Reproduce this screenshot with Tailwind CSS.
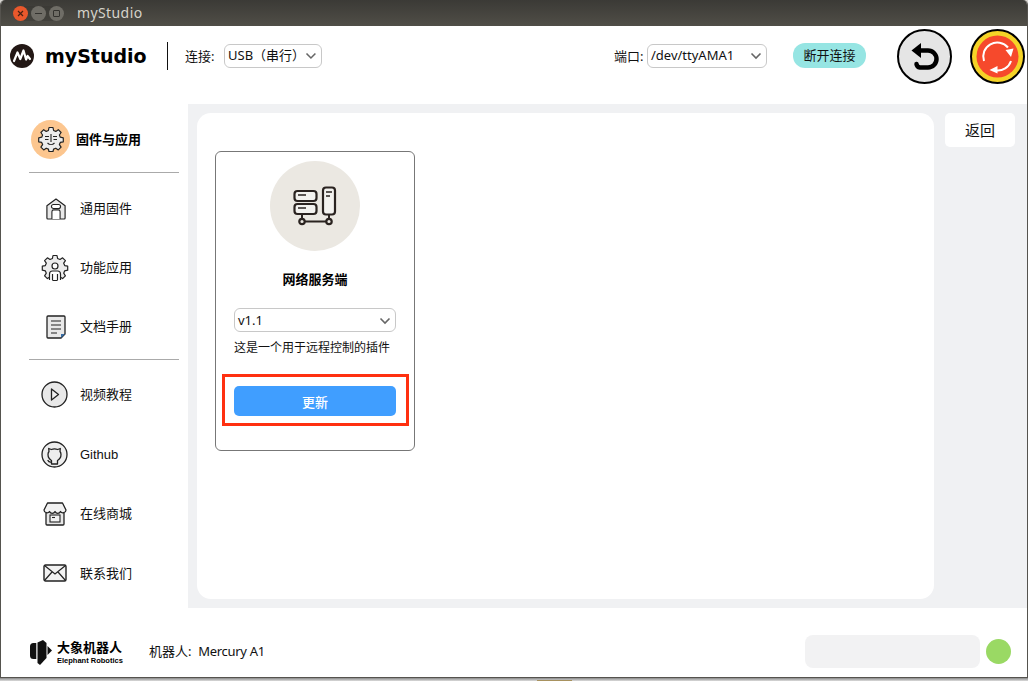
<!DOCTYPE html>
<html lang="zh-CN">
<head>
<meta charset="UTF-8">
<title>myStudio</title>
<script src="https://cdn.jsdelivr.net/npm/@tailwindcss/browser@4"></script>
</head>
<body class="w-[1028px] h-[681px] overflow-hidden bg-[#d8d6d2] font-['Noto_Sans','Noto_Sans_CJK_SC',sans-serif] text-[#111]">
<!-- desktop strip behind the window -->
<div class="relative w-[1028px] h-[681px]">
  <div class="absolute left-0 top-[344px] w-[2px] h-[76px] bg-[#b8325a]"></div>
  <div class="absolute left-0 top-[678px] w-[1028px] h-[3px] bg-gradient-to-b from-[#8a8a8a] to-[#dddddd]"></div>
  <div class="absolute left-[537px] top-[680px] w-[35px] h-[1px] bg-[#a8925f]"></div>

  <div class="absolute left-0 top-0 w-[1028px] h-[678px] flex flex-col border-x border-b border-[#55534e] bg-white rounded-t-[5px] overflow-hidden">
    <!-- title bar -->
    <div class="h-[26px] shrink-0 flex items-center bg-gradient-to-b from-[#3b3a36] to-[#504e47] pl-[12px]">
      <div class="flex items-center gap-[3px] bg-[#35342f]/40 rounded-full">
        <div class="w-[15px] h-[15px] rounded-full bg-[#e9582c] flex items-center justify-center">
          <svg width="7" height="7" viewBox="0 0 7 7"><path d="M1 1l5 5M6 1L1 6" stroke="#4a2112" stroke-width="1.2"/></svg>
        </div>
        <div class="w-[15px] h-[15px] rounded-full bg-[#6f6d66] flex items-center justify-center">
          <div class="w-[7px] h-[1px] bg-[#33322e]"></div>
        </div>
        <div class="w-[15px] h-[15px] rounded-full bg-[#6f6d66] flex items-center justify-center">
          <div class="w-[7px] h-[7px] border border-[#33322e] rounded-[1px]"></div>
        </div>
      </div>
      <span class="ml-[13px] pb-[1px] text-[14px] text-[#d6d3ca] tracking-[0.4px]">myStudio</span>
    </div>

    <!-- header -->
    <div class="h-[78px] shrink-0 flex items-start bg-white">
      <svg class="ml-[9px] mt-[18px] shrink-0" width="24" height="24" viewBox="0 0 24 24">
        <circle cx="12" cy="12" r="12" fill="#231815"/>
        <path d="M4 17l3.500-8.500 2.800 6.500 3.200-8.500 2.600 9 1.500-3.500 2.400 3" fill="none" stroke="#fff" stroke-width="2.2" stroke-linecap="round" stroke-linejoin="round"/>
      </svg>
      <span class="ml-[11px] mt-[14px] text-[19px] leading-[32px] font-bold text-black font-['DejaVu_Sans','Noto_Sans_CJK_SC',sans-serif] w-[122px] whitespace-nowrap">myStudio</span>
      <div class="mt-[16px] w-[1px] h-[28px] bg-[#111] shrink-0"></div>
      <span class="ml-[17px] mt-[18px] leading-[24px] text-[13px] w-[39px] whitespace-nowrap">连接:</span>
      <div class="mt-[18px] w-[98px] h-[24px] border border-[#c8c8c8] rounded-[6px] flex items-center justify-between pl-[3px] pr-[4px] text-[13px] whitespace-nowrap">
        <span>USB（串行）</span>
        <svg width="12" height="8" viewBox="0 0 12 8"><path d="M1.500 1.500L6 6l4.500-4.500" fill="none" stroke="#666" stroke-width="1.600"/></svg>
      </div>
      <span class="ml-[292px] mt-[18px] leading-[24px] text-[13px] w-[33px] whitespace-nowrap">端口:</span>
      <div class="mt-[18px] w-[120px] h-[24px] border border-[#c8c8c8] rounded-[6px] flex items-center justify-between pl-[3px] pr-[4px] text-[13px] whitespace-nowrap">
        <span>/dev/ttyAMA1</span>
        <svg width="12" height="8" viewBox="0 0 12 8"><path d="M1.500 1.500L6 6l4.500-4.500" fill="none" stroke="#666" stroke-width="1.600"/></svg>
      </div>
      <div class="ml-[26px] mt-[17px] w-[73px] h-[25px] rounded-[12px] bg-[#96e5e3] text-[13px] leading-[25px] text-center">断开连接</div>
      <!-- back -->
      <svg class="ml-[31px] mt-[3px] shrink-0" width="55" height="55" viewBox="0 0 55 55">
        <circle cx="27.500" cy="27.500" r="26.500" fill="#e5e5e5" stroke="#000" stroke-width="2"/>
        <path d="M23 21.500h8a8.500 8.500 0 0 1 0 17h-8a4 4 0 0 1-3.500-3.500" fill="none" stroke="#000" stroke-width="4.500" stroke-linecap="round"/>
        <path d="M24 14v15L14.500 21.500z" fill="#000"/>
      </svg>
      <!-- reset -->
      <svg class="ml-[18px] mt-[3px] shrink-0" width="55" height="55" viewBox="0 0 55 55">
        <circle cx="27.500" cy="27.500" r="26.500" fill="#f5d327" stroke="#000" stroke-width="2"/>
        <circle cx="27.500" cy="27.500" r="21" fill="#f6492c"/>
        <path d="M14 32A14 14 0 0 1 38 18.500M41 32A14 14 0 0 1 26 41.500" fill="none" stroke="#fff" stroke-width="2"/>
        <path d="M35.500 21l8-1.500-2.500 8.500zM27.500 37v7.500l-8-3.500z" fill="#fff"/>
      </svg>
    </div>

    <!-- body -->
    <div class="h-[504px] shrink-0 flex">
      <!-- sidebar -->
      <div class="w-[187px] shrink-0 bg-white flex flex-col pl-[28px] text-[13px] font-['Liberation_Sans','Noto_Sans_CJK_SC',sans-serif]">
        <div class="mt-[15px] h-[40px] flex items-center pl-[2px]">
          <div class="w-[39px] h-[39px] rounded-full bg-[#fcc68f] flex items-center justify-center">
            <svg width="26" height="26" viewBox="0 0 26 26">
              <path d="M11 1.500h4l.6 3 2.200.9 2.500-1.700 2.800 2.800-1.700 2.500.9 2.200 3 .6v4l-3 .6-.9 2.200 1.700 2.500-2.800 2.800-2.500-1.700-2.200.9-.6 2.400h-4l-.6-2.400-2.200-.9-2.500 1.700-2.800-2.800 1.700-2.500-.9-2.200-3-.6v-4l3-.6.9-2.200-1.700-2.500 2.800-2.800 2.500 1.700 2.200-.9z" fill="#ececec" stroke="#222" stroke-width="1.200" stroke-linejoin="round"/>
              <path d="M7 10.500h4M15 10.500h4M7 13.500h3.500M15.500 13.500h3.500M13 8v8M9.500 17c2 2 5 2 7 0" fill="none" stroke="#222" stroke-width="1.100"/>
            </svg>
          </div>
          <span class="ml-[6px] pt-[1px] font-bold text-black">固件与应用</span>
        </div>
        <div class="mt-[13px] w-[150px] h-[1px] bg-[#aaaaaa]"></div>

        <div class="mt-[6px] h-[59px] flex items-center">
          <div class="w-[51px] flex justify-center pl-[2px]">
            <svg width="20" height="24" viewBox="0 0 22 24">
              <path d="M1 8.500L11 1l10 7.500V22a1 1 0 0 1-1 1H2a1 1 0 0 1-1-1z" fill="#e8e8e8" stroke="#222" stroke-width="1.300" stroke-linejoin="round"/>
              <rect x="6" y="7" width="10" height="4.500" rx="2.200" fill="#fff" stroke="#222" stroke-width="1.200"/>
              <path d="M6.500 23v-8a2 2 0 0 1 2-2h5a2 2 0 0 1 2 2v8" fill="#fff" stroke="#222" stroke-width="1.200"/>
            </svg>
          </div>
          <span>通用固件</span>
        </div>
        <div class="h-[59px] flex items-center">
          <div class="w-[51px] flex justify-center pt-[1px]">
            <svg width="28" height="28" viewBox="0 0 28 28">
              <path d="M12 1.500h4l.6 3 2.400 1 2.600-1.700 2.800 2.800-1.700 2.600 1 2.400 3 .6v4l-3 .6-1 2.400 1.700 2.600-2.800 2.800-2.600-1.700-2.400 1-.6 2.600h-4l-.6-2.600-2.400-1-2.600 1.700-2.800-2.800 1.700-2.600-1-2.400-3-.6v-4l3-.6 1-2.400-1.700-2.600 2.800-2.800 2.600 1.700 2.400-1z" fill="#ececec" stroke="#222" stroke-width="1.200" stroke-linejoin="round"/>
              <circle cx="14" cy="12" r="3" fill="#fff" stroke="#222" stroke-width="1.200"/>
              <path d="M8.500 26v-6a3 3 0 0 1 3-3h5a3 3 0 0 1 3 3v6M11.500 20v6M16.500 20v6" fill="#fff" stroke="#222" stroke-width="1.200"/>
            </svg>
          </div>
          <span>功能应用</span>
        </div>
        <div class="h-[59px] flex items-center">
          <div class="w-[51px] flex justify-center pl-[2px] pt-[1px]">
            <svg width="20" height="24" viewBox="0 0 20 24">
              <path d="M2 1h16a1 1 0 0 1 1 1v17l-4 4H2a1 1 0 0 1-1-1V2a1 1 0 0 1 1-1z" fill="#e8e8e8" stroke="#222" stroke-width="1.300"/>
              <path d="M5 6h10M5 10h10M5 14h10M5 18h6" stroke="#222" stroke-width="1.200"/>
              <path d="M15 23v-4h4z" fill="#3a6ea5"/>
            </svg>
          </div>
          <span>文档手册</span>
        </div>
        <div class="mt-[3px] w-[150px] h-[1px] bg-[#aaaaaa]"></div>

        <div class="mt-[5px] h-[59.5px] flex items-center">
          <div class="w-[51px] flex justify-center">
            <svg width="27" height="27" viewBox="0 0 27 27">
              <circle cx="13.500" cy="13.500" r="12.500" fill="#e8e8e8" stroke="#222" stroke-width="1.300"/>
              <path d="M10.500 8l7 5.500-7 5.500z" fill="#f2f2f2" stroke="#222" stroke-width="1.300" stroke-linejoin="round"/>
            </svg>
          </div>
          <span>视频教程</span>
        </div>
        <div class="h-[59.5px] flex items-center">
          <div class="w-[51px] flex justify-center">
            <svg width="27" height="27" viewBox="0 0 27 27">
              <circle cx="13.500" cy="13.500" r="12.500" fill="#eeeeee" stroke="#222" stroke-width="1.300"/>
              <path d="M10.500 23v-3.500c-1-.6-3.500-2-3.500-6 0-1.200.4-2.200 1-3l-.3-3 2.600 1c1.800-.6 4.600-.6 6.400 0l2.600-1-.3 3c.6.8 1 1.800 1 3 0 4-2.500 5.400-3.500 6V23z" fill="#eeeeee" stroke="#222" stroke-width="1.300" stroke-linejoin="round"/>
              <path d="M10.500 21c-2 .6-3-.3-3.800-2" fill="none" stroke="#222" stroke-width="1.300"/>
            </svg>
          </div>
          <span>Github</span>
        </div>
        <div class="h-[59.5px] flex items-center">
          <div class="w-[51px] flex justify-center pt-[1px]">
            <svg width="24" height="24" viewBox="0 0 24 24">
              <path d="M3 11v11a1 1 0 0 0 1 1h16a1 1 0 0 0 1-1V11" fill="#e8e8e8" stroke="#222" stroke-width="1.300"/>
              <path d="M4.500 1h15l3.500 7a3 3 0 0 1-5.500 1.500A3 3 0 0 1 12 9.500a3 3 0 0 1-5.500 0A3 3 0 0 1 1 8z" fill="#f2f2f2" stroke="#222" stroke-width="1.300" stroke-linejoin="round"/>
              <rect x="7" y="13" width="10" height="7" fill="#f2f2f2" stroke="#222" stroke-width="1.100"/>
              <path d="M9 15.500h3" stroke="#222" stroke-width="1.100"/>
            </svg>
          </div>
          <span>在线商城</span>
        </div>
        <div class="h-[59.5px] flex items-center">
          <div class="w-[51px] flex justify-center">
            <svg width="24" height="18" viewBox="0 0 24 18">
              <rect x="1" y="1" width="22" height="16" rx="1.500" fill="#f2f2f2" stroke="#222" stroke-width="1.400"/>
              <path d="M1.500 1.500L12 10l10.500-8.500M1.500 16.500L9 8M22.500 16.500L15 8" fill="none" stroke="#222" stroke-width="1.200"/>
            </svg>
          </div>
          <span>联系我们</span>
        </div>
      </div>

      <!-- content -->
      <div class="flex-1 bg-[#f0f1f3] flex items-start pl-[9px] pt-[9px]">
        <div class="w-[737px] h-[486px] bg-white rounded-[14px] pl-[18px] pt-[38px]">
          <div class="relative w-[200px] h-[300px] border border-[#777777] rounded-[6px] flex flex-col items-center pt-[9px]">
            <div class="w-[90px] h-[90px] rounded-full bg-[#ebe8e2] flex items-center justify-center pb-[1px]">
              <svg width="44" height="40" viewBox="0 0 44 40">
                <rect x="1.500" y="5" width="22" height="10" rx="3" fill="#f3f2ef" stroke="#2a2320" stroke-width="2.200"/>
                <rect x="1.500" y="18" width="22" height="10" rx="3" fill="#f3f2ef" stroke="#2a2320" stroke-width="2.200"/>
                <rect x="30" y="1.500" width="12" height="27" rx="3" fill="#f3f2ef" stroke="#2a2320" stroke-width="2.200"/>
                <path d="M5 9h8M5 22h8M33 6h6M33 10h4" stroke="#2a2320" stroke-width="1.500"/>
                <path d="M9 28v5M36 28v5M12 35.500h21" stroke="#2a2320" stroke-width="2"/>
                <circle cx="9" cy="35.500" r="2.700" fill="#ebe8e2" stroke="#2a2320" stroke-width="2.200"/>
                <circle cx="36" cy="35.500" r="2.700" fill="#ebe8e2" stroke="#2a2320" stroke-width="2.200"/>
              </svg>
            </div>
            <div class="mt-[19px] h-[18px] leading-[18px] text-[13px] font-bold text-black">网络服务端</div>
            <div class="mt-[20px] w-[162px] h-[24px] border border-[#c8c8c8] rounded-[6px] flex items-center justify-between pl-[3px] pr-[4px] pt-[1px] text-[13px]">
              <span>v1.1</span>
              <svg width="12" height="8" viewBox="0 0 12 8"><path d="M1.500 1.500L6 6l4.500-4.500" fill="none" stroke="#666" stroke-width="1.600"/></svg>
            </div>
            <div class="mt-[8px] w-[162px] text-[12px] leading-[16px] whitespace-nowrap">这是一个用于远程控制的插件</div>
            <div class="mt-[30px] w-[162px] h-[30px] rounded-[5px] bg-[#409eff] text-white text-[13px] font-medium flex items-center justify-center pt-[4px]">更新</div>
            <!-- red annotation box -->
            <div class="absolute left-[6px] top-[222px] w-[187px] h-[52px] border-[3px] border-[#ff3010]"></div>
          </div>
        </div>
        <div class="ml-[11px] w-[70px] h-[34px] bg-white rounded-[5px] text-[15px] flex items-center justify-center pt-[1px]">返回</div>
      </div>
    </div>

    <!-- footer -->
    <div class="flex-1 flex items-start bg-white">
      <svg class="ml-[29px] mt-[32px] shrink-0" width="22" height="25" viewBox="0 0 22 25">
        <path d="M3.500 3h2.800v16H3.500A3.500 3.500 0 0 1 0 15.500v-9A3.500 3.500 0 0 1 3.500 3z" fill="#111"/>
        <path d="M7.500 2.500L13 0l3.500 3v15L10 25l-2.500-2z" fill="#111"/>
        <path d="M17.500 6L22 10.500 17.500 15z" fill="#111"/>
      </svg>
      <div class="ml-[5px] mt-[31px] w-[92px] flex flex-col">
        <span class="text-[13px] leading-[17px] font-bold text-black whitespace-nowrap">大象机器人</span>
        <span class="text-[7.500px] leading-[10px] font-bold text-black font-['Liberation_Sans',sans-serif] whitespace-nowrap">Elephant Robotics</span>
      </div>
      <span class="mt-[33px] text-[13px] leading-[20px] whitespace-nowrap">机器人:&nbsp; <span class="tracking-[-0.3px]">Mercury A1</span></span>
      <div class="ml-auto mt-[27px] w-[175px] h-[33px] rounded-[8px] bg-[#f2f2f3]"></div>
      <div class="ml-[6px] mr-[16px] mt-[31px] w-[25px] h-[25px] rounded-full bg-[#9ad964]"></div>
    </div>
  </div>
</div>
</body>
</html>
